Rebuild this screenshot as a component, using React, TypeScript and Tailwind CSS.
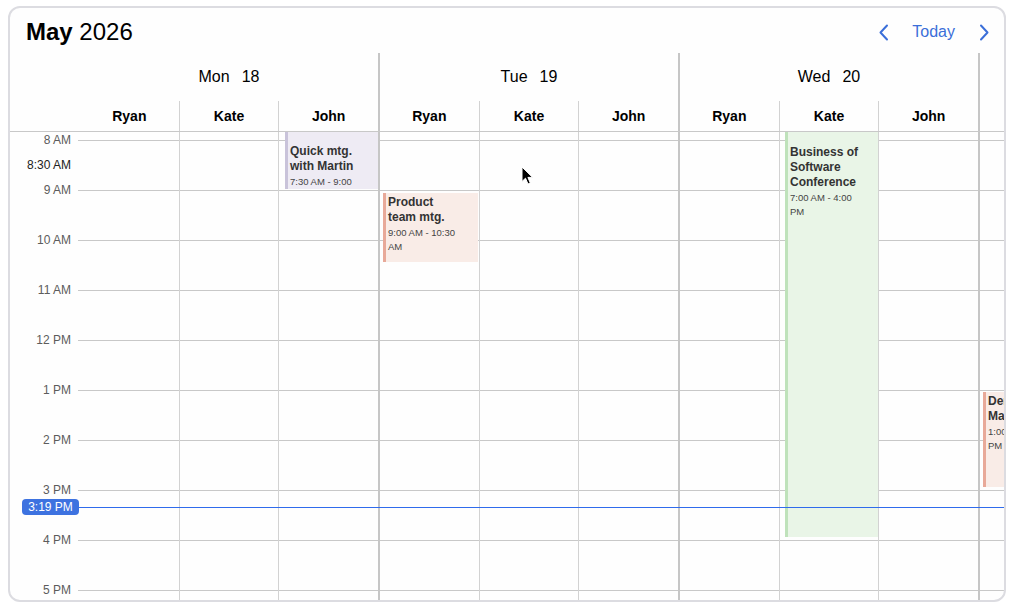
// App.tsx
/* Week calendar for three people, shown by day and by person. */

const days = [
  { name: "Mon", date: 18, shown: true },
  { name: "Tue", date: 19, shown: true },
  { name: "Wed", date: 20, shown: true },
  { name: "Thu", date: 21, shown: false }, // only its left edge is in view
];

const people = ["Ryan", "Kate", "John"];

const hours = ["8 AM", "9 AM", "10 AM", "11 AM", "12 PM", "1 PM", "2 PM", "3 PM", "4 PM", "5 PM"];

type CalEvent = {
  title: string;
  time: string;
  box: string; // position and size on the time grid
  tone: string;
};

const events: CalEvent[] = [
  {
    title: "Quick mtg. with Martin",
    time: "7:30 AM - 9:00 AM",
    box: "left-[275px] top-0 w-[93px] h-[57px] pt-[12px]",
    tone: "bg-[#eeebf4] border-[#c9c3da]",
  },
  {
    title: "Product team mtg.",
    time: "9:00 AM - 10:30 AM",
    box: "left-[373px] top-[61px] w-[95px] h-[69px] pt-[2px]",
    tone: "bg-[#f9ece7] border-[#e8a999]",
  },
  {
    title: "Business of Software Conference",
    time: "7:00 AM - 4:00 PM",
    box: "left-[775px] top-0 w-[93px] h-[405px] pt-[13px]",
    tone: "bg-[#e9f5e7] border-[#bfe2bb]",
  },
  {
    title: "Demo for Marketing",
    time: "1:00 PM - 3:00 PM",
    box: "left-[973px] top-[260px] w-[95px] h-[95px] pt-[2px]",
    tone: "bg-[#f9ece7] border-[#e8a999]",
  },
];

const Chevron = ({ left }: { left?: boolean }) => (
  <svg width="12" height="17" viewBox="0 0 12 17" fill="none">
    <polyline
      points={left ? "9,1.5 2.5,8.5 9,15.5" : "3,1.5 9.5,8.5 3,15.5"}
      stroke="#3b6fd9"
      strokeWidth="2"
      strokeLinecap="round"
      strokeLinejoin="round"
    />
  </svg>
);

const App = () => {
  return (
    <div className="w-[1012px] h-[610px] bg-white pl-[8px] pt-[6px] font-['Liberation_Sans',Arial,sans-serif] text-black">
      <div className="w-[998px] h-[596px] border-2 border-[#dcdce1] rounded-[12px] overflow-hidden flex flex-col bg-[#fefefe]">
        {/* title and navigation */}
        <div className="h-[45px] shrink-0 flex items-start justify-between pl-[16px] pr-[14px] pt-[10px]">
          <h1 className="text-[24px] leading-[28px]">
            <span className="font-bold">May</span> 2026
          </h1>
          <div className="flex items-center h-[28px] text-[16px] text-[#3b6fd9]">
            <Chevron left />
            <span className="ml-[22px] mr-[23px]">Today</span>
            <Chevron />
          </div>
        </div>

        {/* day names */}
        <div className="h-[48px] shrink-0 flex">
          <div className="w-[70px] shrink-0" />
          {days.map((d) => (
            <div
              key={d.name}
              className="w-[300px] shrink-0 border-r-2 border-[#c6c6c6] flex items-center justify-center gap-[12px] text-[16px]"
            >
              {d.shown && (
                <>
                  <span>{d.name}</span>
                  <span>{d.date}</span>
                </>
              )}
            </div>
          ))}
        </div>

        {/* people */}
        <div className="h-[31px] shrink-0 flex border-b border-[#c8c8c8]">
          <div className="w-[70px] shrink-0" />
          {days.map((d) => (
            <div key={d.name} className="w-[300px] shrink-0 border-r-2 border-[#c6c6c6] flex">
              {people.map((p, i) => (
                <div
                  key={p}
                  className={`flex-1 flex items-center justify-center text-[14px] font-bold ${
                    i < 2 ? "border-r border-[#d2d2d2]" : ""
                  }`}
                >
                  {d.shown ? p : ""}
                </div>
              ))}
            </div>
          ))}
        </div>

        {/* time grid */}
        <div className="relative flex-1 overflow-hidden">
          <div className="pt-[8px]">
            {hours.map((h, idx) => (
              <div key={h} className="h-[50px] flex">
                <div className="w-[68px] shrink-0 flex flex-col items-end pr-[7px] text-[12px] leading-[14px]">
                  <span className="-mt-[7px] text-[#5c5c5c]">{h}</span>
                  {idx === 0 && <span className="mt-[11px] text-[#222]">8:30 AM</span>}
                </div>
                <div className="flex-1 border-t border-[#c8c8c8]" />
              </div>
            ))}
          </div>

          <div className="absolute top-0 bottom-0 left-[70px] flex pointer-events-none">
            {days.map((d) => (
              <div key={d.name} className="w-[300px] shrink-0 border-r-2 border-[#c6c6c6] flex">
                {people.map((p, i) => (
                  <div key={p} className={`flex-1 ${i < 2 ? "border-r border-[#d2d2d2]" : ""}`} />
                ))}
              </div>
            ))}
          </div>

          {events.map((e) => (
            <div
              key={e.title}
              className={`absolute overflow-hidden border-l-[3px] pl-[2px] pr-[16px] text-[#333] ${e.box} ${e.tone}`}
            >
              <div className="text-[12px] leading-[15px] font-bold">{e.title}</div>
              <div className="text-[9.5px] leading-[14px] mt-[1px] text-[#444]">{e.time}</div>
            </div>
          ))}

          {/* current time */}
          <div className="absolute left-[68px] right-0 top-[375px] h-px bg-[#2f6bec]" />
          <div className="absolute left-[12px] top-[367px] w-[57px] h-[16px] rounded-[4px] bg-[#3d72e0] text-white text-[12px] leading-[16px] text-center">
            3:19 PM
          </div>

          {/* mouse pointer */}
          <svg className="absolute left-[511px] top-[34px]" width="13" height="20" viewBox="0 0 13 20">
            <path
              d="M1 1 L1 15.5 L4.5 12.2 L7 18 L9.3 17 L6.9 11.4 L11.6 11.4 Z"
              fill="#000"
              stroke="#fff"
              strokeWidth="1"
              strokeLinejoin="round"
            />
          </svg>
        </div>
      </div>
    </div>
  );
};

export default App;
